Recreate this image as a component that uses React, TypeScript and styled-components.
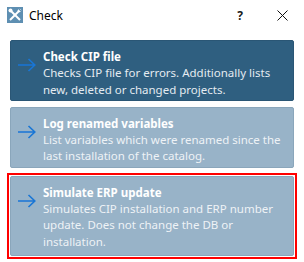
import React from "react";
import styled, { createGlobalStyle } from "styled-components";

const Global = createGlobalStyle`
  html, body { margin: 0; padding: 0; background: #ffffff; }
  body { width: 304px; height: 262px; overflow: hidden; font-family: "Noto Sans", "Open Sans", sans-serif; }
`;

const Window = styled.div`
  width: 304px;
  height: 262px;
  background: #ffffff;
  display: flex;
  flex-direction: column;
`;

const TitleBar = styled.div`
  height: 30px;
  display: flex;
  align-items: center;
  padding: 0 0 0 7px;
  box-sizing: border-box;
`;

const TitleText = styled.span`
  margin-left: 6px;
  font-size: 12px;
  color: #000;
  flex: 1;
`;

const HelpButton = styled.span`
  width: 20px;
  margin-right: 26px;
  display: flex;
  justify-content: center;
  font-size: 12px;
  font-weight: bold;
  color: #1a1a1a;
`;

const CloseButton = styled.span`
  width: 12px;
  margin-right: 16px;
  display: flex;
  justify-content: center;
`;

const Content = styled.div`
  display: flex;
  flex-direction: column;
  padding: 10px 10px 0 10px;
`;

const Card = styled.div<{ $dark?: boolean }>`
  display: flex;
  align-items: flex-start;
  background: ${(p) => (p.$dark ? "#2f5f80" : "#98b3c8")};
  border: 1px solid ${(p) => (p.$dark ? "#2a5675" : "#8aa6bb")};
  border-radius: 2px;
  padding: 8px 6px 2px 7px;
  margin-bottom: ${(p) => (p.$dark ? "6px" : "5px")};
`;

const Highlight = styled.div`
  margin: 0 -3px;
  border: 2px solid #ff0000;
  padding: 1px;
  & > div { margin-bottom: 0; padding-bottom: 5px; }
`;

const ArrowBox = styled.div`
  width: 18px;
  height: 14px;
  margin-top: 6px;
  margin-right: 7px;
  flex-shrink: 0;
`;

const Texts = styled.div`
  display: flex;
  flex-direction: column;
  line-height: 16.3px;
  font-size: 11.5px;
`;

const CardTitle = styled.div`
  font-weight: bold;
  color: #ffffff;
`;

const CardDesc = styled.div<{ $dark?: boolean }>`
  color: ${(p) => (p.$dark ? "#e4ebf1" : "#eef2f6")};
`;

const Arrow = () => (
  <svg width="18" height="14" viewBox="0 0 18 14">
    <path d="M0 7 H16.5 M10.5 1 L16.8 7 L10.5 13" fill="none" stroke="#1976d6" strokeWidth="1.6" />
  </svg>
);

const CloseIcon = () => (
  <svg width="11" height="11" viewBox="0 0 11 11">
    <path d="M0.5 0.5 L10.5 10.5 M10.5 0.5 L0.5 10.5" stroke="#111" strokeWidth="1" />
  </svg>
);

const ToolsIcon = () => (
  <svg width="16" height="16" viewBox="0 0 16 16">
    <rect x="0" y="0" width="16" height="16" fill="#5e8fb2" />
    <path d="M3 3 L13 13" stroke="#fff" strokeWidth="2" />
    <path d="M13 3 L3 13" stroke="#fff" strokeWidth="2" />
    <circle cx="3.5" cy="3.5" r="2" fill="#fff" />
    <circle cx="12.5" cy="3.5" r="1.8" fill="#fff" />
    <path d="M11.5 1.5 L14.5 4.5" stroke="#5e8fb2" strokeWidth="1.2" />
  </svg>
);

const items = [
  {
    title: "Check CIP file",
    desc: "Checks CIP file for errors. Additionally lists new, deleted or changed projects.",
    dark: true,
  },
  {
    title: "Log renamed variables",
    desc: "List variables which were renamed since the last installation of the catalog.",
    dark: false,
  },
];

const ItemCard = ({ title, desc, dark }: { title: string; desc: string; dark?: boolean }) => (
  <Card $dark={dark}>
    <ArrowBox>
      <Arrow />
    </ArrowBox>
    <Texts>
      <CardTitle>{title}</CardTitle>
      <CardDesc $dark={dark}>{desc}</CardDesc>
    </Texts>
  </Card>
);

export default function App() {
  return (
    <Window>
      <Global />
      <TitleBar>
        <ToolsIcon />
        <TitleText>Check</TitleText>
        <HelpButton>?</HelpButton>
        <CloseButton>
          <CloseIcon />
        </CloseButton>
      </TitleBar>
      <Content>
        {items.map((it) => (
          <ItemCard key={it.title} {...it} />
        ))}
        <Highlight>
          <ItemCard
            title="Simulate ERP update"
            desc="Simulates CIP installation and ERP number update. Does not change the DB or installation."
          />
        </Highlight>
      </Content>
    </Window>
  );
}
